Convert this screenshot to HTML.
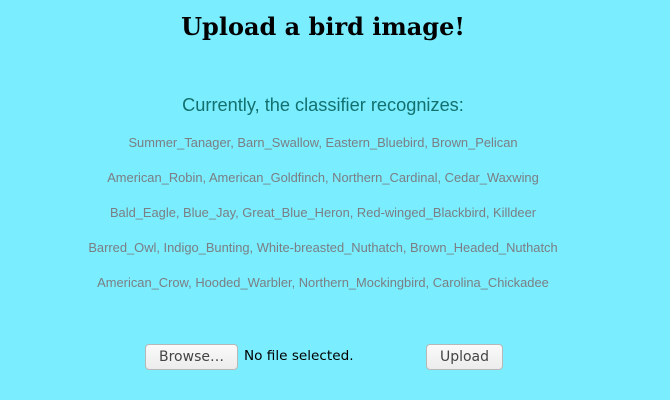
<!DOCTYPE html>
<html><head><style>
body{margin:0;width:670px;height:400px;background:#7aedfe;position:relative;overflow:hidden;font-family:"Liberation Sans",sans-serif}
.c{position:absolute;left:0;width:646px;text-align:center;white-space:nowrap}
h1{margin:0;font-family:"DejaVu Serif","Liberation Serif",serif;font-size:24px;font-weight:bold;color:#000;top:12px}
.s{top:95px;font-size:18.2px;color:#13706e}
.l{font-size:12.9px;color:#7b7e84}
.b{position:absolute;height:26px;border:1px solid #b8b8b8;border-radius:4px;background:linear-gradient(#fafafa,#ececec);font-family:"DejaVu Sans",sans-serif;font-size:14px;color:#444;text-align:center;box-sizing:border-box;line-height:25px}
.n{position:absolute;left:244px;top:348px;font-family:"DejaVu Sans",sans-serif;font-size:13.6px;color:#000}
</style></head><body>
<h1 class="c">Upload a bird image!</h1>
<div class="c s">Currently, the classifier recognizes:</div>
<div class="c l" style="top:135px">Summer_Tanager, Barn_Swallow, Eastern_Bluebird, Brown_Pelican</div>
<div class="c l" style="top:170px">American_Robin, American_Goldfinch, Northern_Cardinal, Cedar_Waxwing</div>
<div class="c l" style="top:205px">Bald_Eagle, Blue_Jay, Great_Blue_Heron, Red-winged_Blackbird, Killdeer</div>
<div class="c l" style="top:240px">Barred_Owl, Indigo_Bunting, White-breasted_Nuthatch, Brown_Headed_Nuthatch</div>
<div class="c l" style="top:275px">American_Crow, Hooded_Warbler, Northern_Mockingbird, Carolina_Chickadee</div>
<div class="b" style="left:145px;top:344px;width:93px">Browse…</div>
<div class="n">No file selected.</div>
<div class="b" style="left:426px;top:344px;width:77px">Upload</div>
</body></html>
